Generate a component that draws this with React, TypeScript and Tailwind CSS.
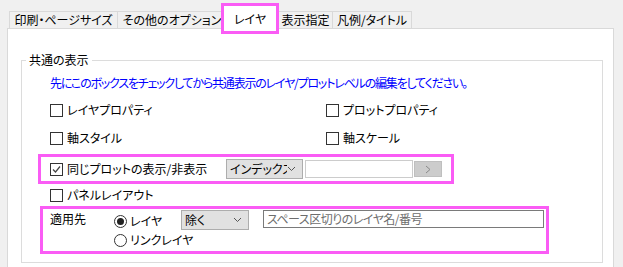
import React from 'react';

/** Small square checkbox in the classic Windows style */
function CheckBox({ checked = false }: { checked?: boolean }) {
  return (
    <span className="flex h-[13px] w-[13px] shrink-0 items-center justify-center border border-[#333333] bg-white">
      {checked && (
        <svg width="11" height="11" viewBox="0 0 11 11" fill="none">
          <path d="M2 5.5 L4.5 8 L9 2.5" stroke="#444444" strokeWidth="1.2" />
        </svg>
      )}
    </span>
  );
}

function Radio({ checked = false }: { checked?: boolean }) {
  return (
    <span className="flex h-[13px] w-[13px] shrink-0 items-center justify-center rounded-full border border-[#333333] bg-white">
      {checked && <span className="h-[7px] w-[7px] rounded-full bg-[#222222]" />}
    </span>
  );
}

function Chevron() {
  return (
    <svg width="9" height="6" viewBox="0 0 9 6" fill="none" className="shrink-0">
      <path d="M1 1 L4.5 4.5 L8 1" stroke="#555555" strokeWidth="1" />
    </svg>
  );
}

function Combo({ label, width }: { label: string; width: string }) {
  return (
    <div
      className={`flex h-[20px] shrink-0 items-center border border-[#adadad] bg-[#e1e1e1] pl-[3px] pr-[6px] ${width}`}
    >
      <span className="flex-1 overflow-hidden whitespace-nowrap leading-[18px]">{label}</span>
      <Chevron />
    </div>
  );
}

function CheckRow({ label, checked }: { label: string; checked?: boolean }) {
  return (
    <div className="flex h-[16px] items-center gap-[4px]">
      <CheckBox checked={checked} />
      <span className="leading-[16px]">{label}</span>
    </div>
  );
}

const tabs = ['印刷・ページサイズ', 'その他のオプション'];

export default function App() {
  return (
    <div className="h-[267px] w-[623px] overflow-hidden bg-[#f0f0f0] font-['Noto_Sans_CJK_JP','Noto_Sans',sans-serif] text-[12px] text-black [font-feature-settings:'palt']">
      {/* Tab strip */}
      <div className="flex h-[28px] pl-[9px]">
        <div className="mt-[11px] flex h-[17px] w-[109px] items-center justify-center border border-b-0 border-[#d9d9d9] bg-[#f0f0f0] leading-[16px]">
          {tabs[0]}
        </div>
        <div className="-ml-px mt-[11px] flex h-[17px] w-[106px] items-center justify-center overflow-hidden whitespace-nowrap border border-b-0 border-[#d9d9d9] bg-[#f0f0f0] pl-[4px] leading-[16px]">
          {tabs[1]}
        </div>
        <div className="relative z-10 -ml-[2px] mt-[3px] flex h-[31px] w-[58px] shrink-0 items-start justify-center border-[3px] border-[#fa5cf5] bg-white pt-[5px] leading-[16px]">
          レイヤ
        </div>
        <div className="mt-[11px] flex h-[17px] w-[54px] items-center justify-center border border-b-0 border-l-0 border-[#d9d9d9] bg-[#f0f0f0] leading-[16px]">
          表示指定
        </div>
        <div className="-ml-px mt-[11px] flex h-[17px] w-[80px] items-center justify-center border border-b-0 border-[#d9d9d9] bg-[#f0f0f0] leading-[16px]">
          凡例/タイトル
        </div>
      </div>

      {/* Tab page */}
      <div className="ml-[7px] h-[260px] w-[607px] border border-[#d9d9d9] bg-white">
        <fieldset className="ml-[13px] mt-[24px] h-[210px] w-[582px] border border-[#dcdcdc]">
          <legend className="ml-[4px] px-[3px] leading-[14px]">共通の表示</legend>

          <div className="mt-[8px] whitespace-nowrap pl-[28px] leading-[16px] tracking-[-1.2px] text-[#0000ff]">
            先にこのボックスをチェックしてから共通表示のレイヤ/プロットレベルの編集をしてください。
          </div>

          <div className="mt-[11px] flex pl-[28px]">
            <div className="w-[276px]">
              <CheckRow label="レイヤプロパティ" />
            </div>
            <CheckRow label="プロットプロパティ" />
          </div>
          <div className="mt-[12px] flex pl-[28px]">
            <div className="w-[276px]">
              <CheckRow label="軸スタイル" />
            </div>
            <CheckRow label="軸スケール" />
          </div>

          {/* Highlighted show/hide row */}
          <div className="ml-[16px] mt-[8px] flex h-[30px] w-[416px] items-center border-[3px] border-[#fa5cf5] pl-[9px]">
            <div className="w-[176px]">
              <CheckRow label="同じプロットの表示/非表示" checked />
            </div>
            <Combo label="インデックス" width="w-[77px]" />
            <div className="ml-[2px] h-[18px] w-[108px] border border-[#cccccc] bg-white" />
            <div className="ml-px flex h-[16px] w-[28px] items-center justify-center border border-[#bfbfbf] bg-[#cccccc]">
              <svg width="6" height="9" viewBox="0 0 6 9" fill="none">
                <path d="M1 1 L5 4.5 L1 8" stroke="#8a8a8a" strokeWidth="1" />
              </svg>
            </div>
          </div>

          <div className="mt-[3px] pl-[28px]">
            <CheckRow label="パネルレイアウト" />
          </div>

          {/* Highlighted apply-to row */}
          <div className="ml-[18px] mt-[3px] flex h-[48px] w-[509px] items-start border-[3px] border-[#fa5cf5] pl-[7px]">
            <div className="mt-[3px] w-[64px] leading-[14px]">適用先</div>
            <div className="mt-[4px] flex w-[67px] flex-col gap-[3px]">
              <div className="flex h-[16px] items-center gap-[3px]">
                <Radio checked />
                <span className="leading-[16px]">レイヤ</span>
              </div>
              <div className="flex h-[16px] items-center gap-[3px]">
                <Radio />
                <span className="whitespace-nowrap leading-[16px]">リンクレイヤ</span>
              </div>
            </div>
            <div className="mt-[1px]">
              <Combo label="除く" width="w-[68px]" />
            </div>
            <div className="ml-[14px] mt-[1px] flex h-[18px] w-[281px] items-center border border-[#7a7a7a] bg-white pl-[3px] leading-[16px] tracking-[-0.5px] text-[#6d6d6d]">
              スペース区切りのレイヤ名/番号
            </div>
          </div>
        </fieldset>
      </div>
    </div>
  );
}
